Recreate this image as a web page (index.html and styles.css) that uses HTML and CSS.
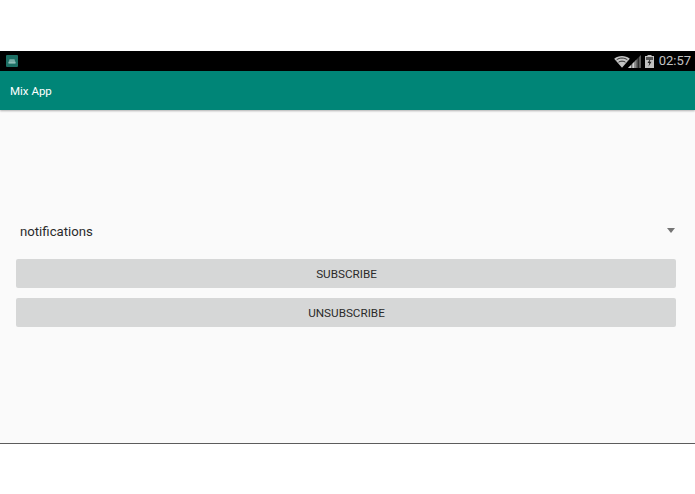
FILE: index.html
```html
<!DOCTYPE html>
<html lang="en">
<head>
<meta charset="utf-8">
<title>Mix App</title>
<link rel="stylesheet" href="styles.css">
</head>
<body>
<div class="top-gap"></div>
<div class="device">
  <div class="status-bar">
    <svg class="notif-icon" width="12" height="12" viewBox="0 0 12 12">
      <rect width="12" height="12" rx="1" fill="#1d6f64"/>
      <path d="M2.500 8.500h7V7.500l-1-3h-5l-1 3z" fill="#a9cfc9"/>
      <path d="M4 5v2.500M6 5v2.500M8 5v2.500" stroke="#1d6f64" stroke-width=".7"/>
    </svg>
    <div class="status-right">
      <svg class="wifi" width="16" height="13" viewBox="0 0 17 13" preserveAspectRatio="none">
        <path d="M8.500 12.800L0.200 3.800C4.800 .2 12.200 .2 16.800 3.800z" fill="#c4c4c4"/>
        <path d="M2.800 4.800C6 2.500 11 2.500 14.200 4.800" stroke="#000" stroke-width=".8" fill="none"/>
        <path d="M4.800 7.200C6.800 5.800 10.200 5.800 12.200 7.200" stroke="#000" stroke-width=".8" fill="none"/>
      </svg>
      <svg class="signal" width="13" height="13" viewBox="0 0 12 12">
        <path d="M0 12L12 0v12z" fill="#5a5a5a"/>
        <path d="M0 12L7.500 4.500V12z" fill="#d0d0d0"/>
        <path d="M3.500 8v4M6.500 5v7M9.500 2v10" stroke="#000" stroke-width=".6"/>
      </svg>
      <svg class="battery" width="9" height="13" viewBox="0 0 9 13">
        <rect y="1" width="9" height="12" fill="#c0c0c0"/>
        <rect x="2.500" width="4" height="1.500" fill="#c0c0c0"/>
        <rect x="1" y="2" width="7" height="3" fill="#555"/>
        <path d="M5.500 3.500L2.500 8h1.800L3.500 11.500 6.500 6.800H4.700z" fill="#222"/>
      </svg>
      <span class="clock">02:57</span>
    </div>
  </div>
  <header class="app-bar">Mix App</header>
  <main class="content">
    <div class="spinner">
      <span class="spinner-label">notifications</span>
      <span class="spinner-arrow"></span>
    </div>
    <button class="action">SUBSCRIBE</button>
    <button class="action">UNSUBSCRIBE</button>
  </main>
</div>
</body>
</html>
```
FILE: styles.css
```css
* { box-sizing: border-box; }
html, body { margin: 0; padding: 0; background: #fff; }
body { width: 695px; height: 494px; overflow: hidden; font-family: Roboto, "Liberation Sans", sans-serif; }
.top-gap { height: 51px; }
.device { height: 393px; display: flex; flex-direction: column; background: #fafafa; border-bottom: 1px solid #5c5c5c; }
.status-bar { height: 20px; background: #000; display: flex; align-items: center; justify-content: space-between; padding: 0 4px 0 6px; }
.notif-icon { display: block; }
.status-right { display: flex; align-items: center; }
.wifi { margin-right: -2px; }
.signal { margin-right: 4px; }
.battery { margin-right: 5px; }
.clock { color: #c4c4c4; font-size: 13px; line-height: 20px; }
.app-bar { height: 39px; background: #008577; color: #fff; font-size: 11.500px; line-height: 40px; padding-left: 10px; box-shadow: 0 1px 2px rgba(0,0,0,.3); position: relative; }
.content { flex: 1; padding: 104px 19px 0 16px; display: flex; flex-direction: column; }
.spinner { height: 34px; flex: none; display: flex; align-items: center; justify-content: space-between; padding: 0 1px 0 4px; margin-bottom: 10.500px; }
.spinner-label { color: #2b2b2b; font-size: 13.200px; }
.spinner-arrow { width: 0; height: 0; border-style: solid; border-width: 5px 4.500px 0; border-color: #757575 transparent transparent; margin-top: -1px; }
.action { height: 29.500px; flex: none; margin: 0 0 9.500px; padding: 1.500px 0 0 1px; border: 0; border-radius: 2px; background: #d6d7d7; color: #2a2a2a; font-family: inherit; font-size: 11.700px; text-align: center; }
```
